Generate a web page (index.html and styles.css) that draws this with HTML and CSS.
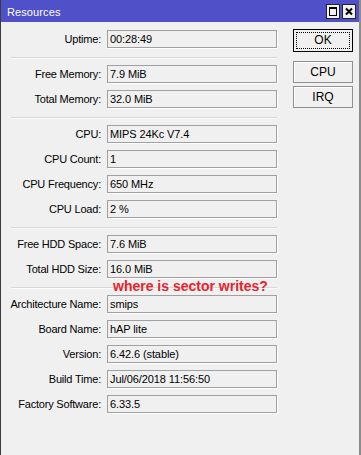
FILE: index.html
```html
<!DOCTYPE html>
<html lang="en">
<head>
    <meta charset="UTF-8">
    <title>Resources</title>
    <link rel="stylesheet" href="styles.css">
</head>
<body>

<div class="window">
    <div class="titlebar">
        <span class="title">Resources</span>
        <div class="tbtns">
            <svg class="tbtn" width="14" height="15" viewBox="0 0 14 15">
                <rect x="0.5" y="0.5" width="13" height="14" fill="#f0f0f0" stroke="#222"/>
                <rect x="3.5" y="3.5" width="7" height="8" fill="none" stroke="#000"/>
                <rect x="3" y="3" width="8" height="2" fill="#000"/>
            </svg>
            <svg class="tbtn" width="14" height="15" viewBox="0 0 14 15">
                <rect x="0.5" y="0.5" width="13" height="14" fill="#f0f0f0" stroke="#222"/>
                <path d="M4 4.5 L10 10.5 M10 4.5 L4 10.5" stroke="#000" stroke-width="2"/>
            </svg>
        </div>
    </div>

    <div class="content">
        <div class="fields">
            <div class="row"><label>Uptime:</label><div class="val">00:28:49</div></div>
            <div class="sep"></div>

            <div class="row"><label>Free Memory:</label><div class="val">7.9 MiB</div></div>
            <div class="row"><label>Total Memory:</label><div class="val">32.0 MiB</div></div>
            <div class="sep"></div>

            <div class="row"><label>CPU:</label><div class="val">MIPS 24Kc V7.4</div></div>
            <div class="row"><label>CPU Count:</label><div class="val">1</div></div>
            <div class="row"><label>CPU Frequency:</label><div class="val">650 MHz</div></div>
            <div class="row"><label>CPU Load:</label><div class="val">2 %</div></div>
            <div class="sep"></div>

            <div class="row"><label>Free HDD Space:</label><div class="val">7.6 MiB</div></div>
            <div class="row"><label>Total HDD Size:</label><div class="val">16.0 MiB</div></div>
            <div class="sep"></div>

            <div class="row"><label>Architecture Name:</label><div class="val">smips</div></div>
            <div class="row"><label>Board Name:</label><div class="val">hAP lite</div></div>
            <div class="row"><label>Version:</label><div class="val">6.42.6 (stable)</div></div>
            <div class="row"><label>Build Time:</label><div class="val">Jul/06/2018 11:56:50</div></div>
            <div class="row"><label>Factory Software:</label><div class="val">6.33.5</div></div>
        </div>

        <div class="buttons">
            <button class="btn btn-ok"><span>OK</span></button>
            <button class="btn btn-cpu">CPU</button>
            <button class="btn">IRQ</button>
        </div>
    </div>

    <!-- anotacion en rojo sobre la captura -->
    <div class="note">where is sector writes?</div>
</div>

</body>
</html>
```

FILE: styles.css
```css
body {
    margin: 0;
    font-family: "Liberation Sans", Arial, sans-serif;
    font-size: 11px;
    color: #000;
    background-color: #f0f0f0;
}
.window {
    position: relative;
    width: 361px;
    height: 455px;
    box-sizing: border-box;
    background-color: #f0f0f0;
    border-left: 1px solid #3c3c3c;
    border-right: 2px solid #8c8c8c;
    overflow: hidden;
}
.titlebar {
    height: 22px;
    background-color: #5050c9;
    display: flex;
    align-items: center;
    justify-content: space-between;
    margin-left: -1px;
    padding-left: 7px;
    padding-right: 3px;
}
.title {
    color: #fff;
    font-size: 11px;
    letter-spacing: 0.1px;
    padding-top: 1px;
}
.tbtns {
    display: flex;
    gap: 2px;
    padding-top: 1px;
}
.tbtn {
    display: block;
}
.content {
    display: flex;
    padding-top: 8px;
}
.fields {
    display: flex;
    flex-direction: column;
    width: 267px;
    margin-left: 9px;
}
.row {
    display: flex;
    height: 18px;
    margin-bottom: 7px;
}
.row label {
    flex: none;
    width: 91px;
    text-align: right;
    line-height: 18px;
    padding-right: 6px;
    letter-spacing: -0.2px;
    white-space: nowrap;
    color: #000;
}
.val {
    width: 170px;
    height: 18px;
    box-sizing: border-box;
    border: 1px solid #a0a0a0;
    box-shadow: 1px 1px 0 #fff;
    line-height: 16px;
    padding-left: 2px;
    letter-spacing: -0.1px;
    white-space: nowrap;
}
.sep {
    height: 0;
    border-top: 1px solid #d8d8d8;
    border-bottom: 1px solid #fafafa;
    margin: 2px 0 6px 1px;
}
.buttons {
    display: flex;
    flex-direction: column;
    margin-left: 16px;
    margin-top: -1px;
}
.btn {
    width: 60px;
    height: 22px;
    box-sizing: border-box;
    font-family: "Liberation Sans", Arial, sans-serif;
    font-size: 12px;
    color: #000;
    background-color: #f0f0f0;
    border: 1px solid #8f8f8f;
    box-shadow: inset 1px 1px 0 #fff;
    padding: 0;
    margin-bottom: 3px;
}
.btn-ok {
    height: 23px;
    border-color: #000;
    padding: 2px;
    margin-bottom: 9px;
    box-shadow: none;
}
.btn-ok span {
    display: block;
    height: 100%;
    box-sizing: border-box;
    border: 1px dotted #000;
    line-height: 15px;
}
.note {
    position: absolute;
    left: 112px;
    top: 279px;
    font-size: 14px;
    line-height: 14px;
    font-weight: bold;
    color: #e8232d;
    white-space: nowrap;
}
```
